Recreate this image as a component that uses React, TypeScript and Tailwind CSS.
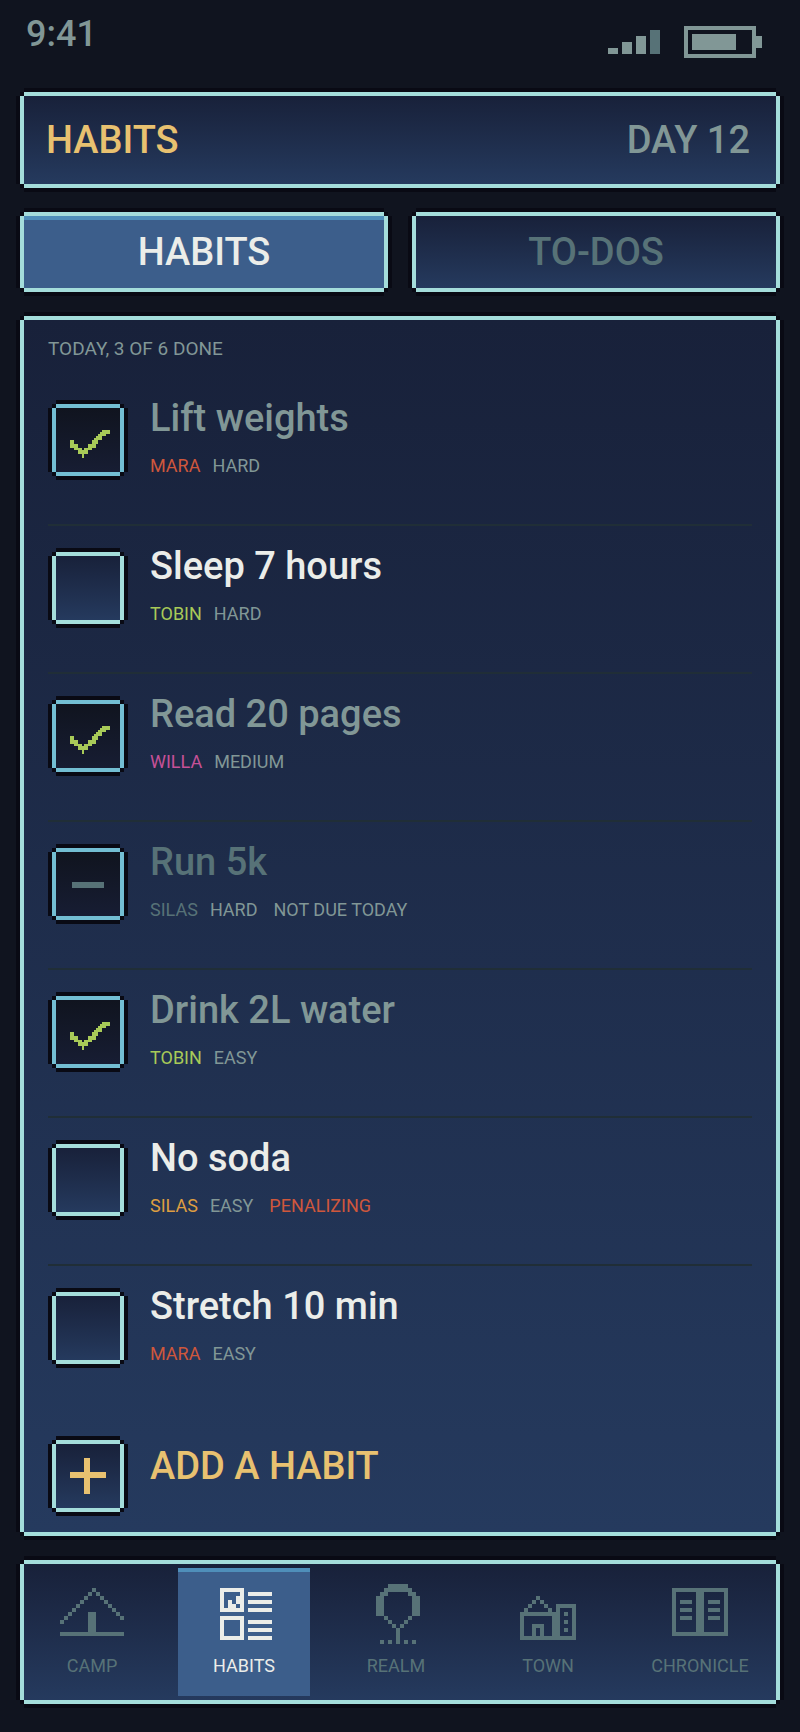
import { useState } from "react";
import clsx from "clsx";

type Habit = {
  id: string;
  name: string;
  hero: string;
  heroColor: string;
  difficulty: string;
  note?: string;
  noteColor?: string;
  notDue?: boolean;
};

const HABITS: Habit[] = [
  { id: "lift", name: "Lift weights", hero: "MARA", heroColor: "text-[#cf573c]", difficulty: "HARD" },
  { id: "sleep", name: "Sleep 7 hours", hero: "TOBIN", heroColor: "text-[#a8ca58]", difficulty: "HARD" },
  { id: "read", name: "Read 20 pages", hero: "WILLA", heroColor: "text-[#c65197]", difficulty: "MEDIUM" },
  {
    id: "run",
    name: "Run 5k",
    hero: "SILAS",
    heroColor: "text-[#577277]",
    difficulty: "HARD",
    note: "NOT DUE TODAY",
    noteColor: "text-[#819796]",
    notDue: true,
  },
  { id: "water", name: "Drink 2L water", hero: "TOBIN", heroColor: "text-[#a8ca58]", difficulty: "EASY" },
  {
    id: "soda",
    name: "No soda",
    hero: "SILAS",
    heroColor: "text-[#de9e41]",
    difficulty: "EASY",
    note: "PENALIZING",
    noteColor: "text-[#cf573c]",
  },
  { id: "stretch", name: "Stretch 10 min", hero: "MARA", heroColor: "text-[#cf573c]", difficulty: "EASY" },
];

// notched pixel frames: a 4px border with a dark 4px outline around it
const FRAME =
  "shadow-[0_-4px_#a4dddb,0_4px_#a4dddb,-4px_0_#a4dddb,4px_0_#a4dddb,0_0_0_4px_#090a14,0_-8px_#090a14,0_8px_#090a14,-8px_0_#090a14,8px_0_#090a14]";
const FRAME_BLUE =
  "shadow-[0_-4px_#73bed3,0_4px_#73bed3,-4px_0_#73bed3,4px_0_#73bed3,0_0_0_4px_#090a14,0_-8px_#090a14,0_8px_#090a14,-8px_0_#090a14,8px_0_#090a14]";
const FILL = "bg-linear-to-b from-[#18213a] to-[#253a5e]";
const BIG_TEXT = "text-[38px] leading-11 font-medium";

// x, y, width, height in grid cells
type Cell = [number, number, number, number];

function Pixels({ cells, size, className }: { cells: Cell[]; size: number; className?: string }) {
  return (
    <svg
      viewBox={`0 0 ${size} ${size}`}
      className={clsx("h-16 w-16", className)}
      fill="currentColor"
      shapeRendering="crispEdges"
      aria-hidden="true"
    >
      {cells.map(([x, y, w, h], i) => (
        <rect key={i} x={x} y={y} width={w} height={h} />
      ))}
    </svg>
  );
}

const CHECK: Cell[] = [
  [7, 16, 2, 4],
  [9, 18, 2, 3],
  [11, 20, 2, 3],
  [13, 21, 1, 4],
  [14, 20, 2, 3],
  [16, 18, 2, 3],
  [18, 16, 2, 4],
  [19, 15, 2, 3],
  [20, 14, 2, 2],
  [21, 13, 2, 3],
  [22, 12, 3, 2],
  [23, 11, 4, 2],
];
const MINUS: Cell[] = [[8, 15, 16, 3]];
const PLUS: Cell[] = [
  [7, 14, 18, 3],
  [14, 7, 3, 18],
];

const CAMP: Cell[] = [
  ...[0, 1, 2, 3, 4, 5, 6, 7, 8].map((k): Cell => [8 - k, 1 + k, 1, 1]),
  ...[1, 2, 3, 4, 5, 6, 7].map((k): Cell => [8 + k, 1 + k, 1, 1]),
  [7, 7, 2, 5],
  [0, 12, 16, 1],
];

const LIST: Cell[] = [
  [2, 1, 6, 1],
  [2, 6, 6, 1],
  [2, 1, 1, 6],
  [7, 1, 1, 6],
  [4, 4, 1, 2],
  [5, 5, 1, 1],
  [6, 3, 1, 2],
  [2, 8, 6, 1],
  [2, 13, 6, 1],
  [2, 8, 1, 6],
  [7, 8, 1, 6],
  ...[2, 4, 6, 9, 11, 13].map((y): Cell => [9, y, 6, 1]),
];

const TREE: Cell[] = [
  [6, 0, 5, 1],
  [5, 1, 7, 1],
  [4, 2, 2, 1],
  [11, 2, 2, 1],
  [3, 3, 2, 5],
  [12, 3, 2, 5],
  [5, 8, 1, 1],
  [11, 8, 1, 1],
  [6, 9, 1, 1],
  [10, 9, 1, 1],
  [7, 10, 1, 1],
  [9, 10, 1, 1],
  [8, 11, 1, 4],
  ...[4, 6, 10, 12].map((x): Cell => [x, 14, 1, 1]),
];

const TOWN: Cell[] = [
  [5, 3, 1, 1],
  [4, 4, 1, 1],
  [6, 4, 1, 1],
  [3, 5, 1, 1],
  [7, 5, 1, 1],
  [2, 6, 1, 1],
  [8, 6, 1, 1],
  [1, 7, 9, 1],
  [1, 7, 1, 7],
  [9, 7, 1, 7],
  [10, 5, 1, 9],
  [10, 5, 5, 1],
  [14, 5, 1, 9],
  [1, 13, 14, 1],
  [4, 10, 3, 1],
  [4, 10, 1, 3],
  [6, 10, 1, 3],
  ...[7, 9, 11].map((y): Cell => [12, y, 1, 1]),
];

const BOOK: Cell[] = [
  [1, 1, 14, 1],
  [1, 12, 14, 1],
  [1, 1, 1, 12],
  [14, 1, 1, 12],
  [7, 1, 2, 12],
  ...[4, 6, 8].map((y): Cell => [3, y, 3, 1]),
  ...[4, 6, 8].map((y): Cell => [10, y, 3, 1]),
];

const NAV = [
  { label: "CAMP", cells: CAMP },
  { label: "HABITS", cells: LIST, active: true },
  { label: "REALM", cells: TREE },
  { label: "TOWN", cells: TOWN },
  { label: "CHRONICLE", cells: BOOK },
];

function StatusBar() {
  return (
    <div className="flex h-24 items-start justify-between pt-3 pr-3.5 pl-0.5 text-[#819796]">
      <span className="text-4xl leading-11 font-medium">9:41</span>
      <div className="flex items-center gap-6 pt-3.5">
        <div className="flex h-6 items-end gap-1">
          <span className="h-1.5 w-2.5 bg-[#819796]" />
          <span className="h-3 w-2.5 bg-[#819796]" />
          <span className="h-4.5 w-2.5 bg-[#819796]" />
          <span className="h-6 w-2.5 bg-[#577277]" />
        </div>
        <div className="flex items-center">
          <div className="h-8 w-18 border-4 border-[#819796] p-1">
            <div className="h-4 w-11 bg-[#819796]" />
          </div>
          <span className="h-3 w-1.5 bg-[#819796]" />
        </div>
      </div>
    </div>
  );
}

interface HabitRowProps {
  habit: Habit;
  done: boolean;
  last: boolean;
  onToggle: () => void;
}

function HabitRow({ habit, done, last, onToggle }: HabitRowProps) {
  const sunken = done || habit.notDue;
  return (
    <li
      className={clsx(
        "flex h-37 items-start gap-7.5 border-b-2 pl-2",
        last ? "border-transparent" : "border-[#202e37]"
      )}
    >
      <div className="relative mt-7.5 h-16 w-16 shrink-0">
        <input
          id={habit.id}
          type="checkbox"
          checked={done}
          disabled={habit.notDue}
          onChange={onToggle}
          className={clsx(
            "block h-16 w-16 appearance-none",
            sunken ? FRAME_BLUE : FRAME,
            sunken ? "bg-linear-to-b from-[#10141f] to-[#171d33]" : FILL
          )}
        />
        {sunken && (
          <Pixels
            cells={done ? CHECK : MINUS}
            size={32}
            className={clsx(
              "pointer-events-none absolute inset-0",
              done ? "text-[#a8ca58]" : "text-[#577277]"
            )}
          />
        )}
      </div>
      <div className="pt-4.5">
        <label
          htmlFor={habit.id}
          className={clsx(
            "block",
            BIG_TEXT,
            habit.notDue ? "text-[#577277]" : done ? "text-[#819796]" : "text-[#ebede9]"
          )}
        >
          {habit.name}
        </label>
        <p className="mt-3.5 flex text-lg leading-6 text-[#819796]">
          <span className={habit.heroColor}>{habit.hero}</span>
          <span className="ml-3">{habit.difficulty}</span>
          {habit.note && <span className={clsx("ml-4", habit.noteColor)}>{habit.note}</span>}
        </p>
      </div>
    </li>
  );
}

export default function App() {
  const [done, setDone] = useState<string[]>(["lift", "read", "water"]);
  const [tab, setTab] = useState("HABITS");

  const toggle = (id: string) =>
    setDone((d) => (d.includes(id) ? d.filter((x) => x !== id) : [...d, id]));

  return (
    <div className="min-h-screen bg-[#10141f] px-6 pb-8 font-['Roboto',sans-serif]">
      <StatusBar />
      <div className="flex flex-col gap-8">
        <header className={clsx("flex h-22 items-center justify-between pr-6.5 pl-5.5", FRAME, FILL)}>
          <h1 className={clsx(BIG_TEXT, "text-[#e8c170]")}>HABITS</h1>
          <span className={clsx(BIG_TEXT, "text-[#819796]")}>DAY 12</span>
        </header>

        <div className="grid grid-cols-2 gap-8">
          {["HABITS", "TO-DOS"].map((t) => (
            <button
              key={t}
              onClick={() => setTab(t)}
              className={clsx(
                "h-18",
                BIG_TEXT,
                FRAME,
                t === tab
                  ? "bg-linear-to-b from-[#4f8fba] from-[4px] to-[#3c5e8b] to-[4px] text-[#ebede9]"
                  : clsx(FILL, "text-[#577277]")
              )}
            >
              {t}
            </button>
          ))}
        </div>

        <main className={clsx("px-6 pt-4 pb-6", FRAME, FILL)}>
          <h2 className="mb-4 text-[19px] leading-[26px] text-[#819796]">TODAY, {done.length} OF 6 DONE</h2>
          <ul>
            {HABITS.map((h, i) => (
              <HabitRow
                key={h.id}
                habit={h}
                done={done.includes(h.id)}
                last={i === HABITS.length - 1}
                onToggle={() => toggle(h.id)}
              />
            ))}
          </ul>
          <button className="flex items-start gap-7.5 pt-7.5 pl-2 text-[#e8c170]">
            <span className={clsx("block h-16 w-16", FRAME, FILL)}>
              <Pixels cells={PLUS} size={32} />
            </span>
            <span className={BIG_TEXT}>ADD A HABIT</span>
          </button>
        </main>

        <nav className={clsx("grid grid-cols-5 gap-5 py-1 pr-2.5 pl-0.5", FRAME, FILL)}>
          {NAV.map((n) => (
            <a
              key={n.label}
              href="#"
              aria-current={n.active ? "page" : undefined}
              className={clsx(
                "flex h-32 flex-col items-center border-t-4 pt-3 text-lg",
                n.active
                  ? "border-[#4f8fba] bg-[#3c5e8b] text-[#ebede9]"
                  : "border-transparent text-[#577277]"
              )}
            >
              <Pixels cells={n.cells} size={16} />
              <span className="mt-1 leading-7">{n.label}</span>
            </a>
          ))}
        </nav>
      </div>
    </div>
  );
}
